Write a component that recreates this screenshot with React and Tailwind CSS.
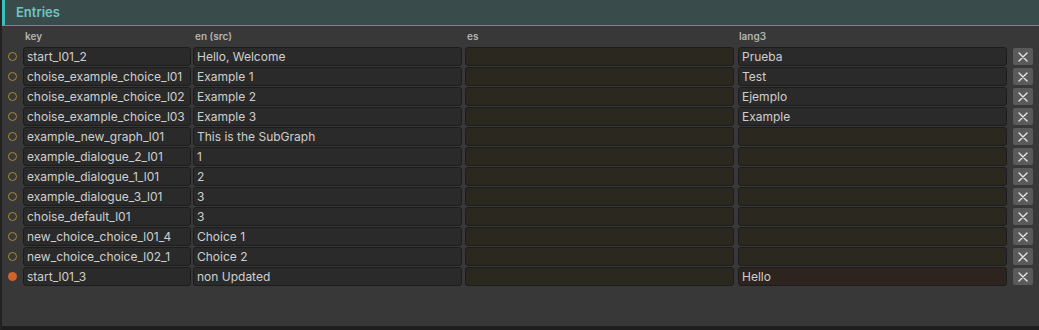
const rows = [
  { key: "start_l01_2", en: "Hello, Welcome", es: "", lang3: "Prueba" },
  { key: "choise_example_choice_l01", en: "Example 1", es: "", lang3: "Test" },
  { key: "choise_example_choice_l02", en: "Example 2", es: "", lang3: "Ejemplo" },
  { key: "choise_example_choice_l03", en: "Example 3", es: "", lang3: "Example" },
  { key: "example_new_graph_l01", en: "This is the SubGraph", es: "", lang3: "" },
  { key: "example_dialogue_2_l01", en: "1", es: "", lang3: "" },
  { key: "example_dialogue_1_l01", en: "2", es: "", lang3: "" },
  { key: "example_dialogue_3_l01", en: "3", es: "", lang3: "" },
  { key: "choise_default_l01", en: "3", es: "", lang3: "" },
  { key: "new_choice_choice_l01_4", en: "Choice 1", es: "", lang3: "" },
  { key: "new_choice_choice_l02_1", en: "Choice 2", es: "", lang3: "" },
  { key: "start_l01_3", en: "non Updated", es: "", lang3: "Hello", stale: true },
];

function Cell({ value, width, tone = "plain" }) {
  const bg = {
    plain: "bg-[#2a2a2a]",
    empty: "bg-[#2b2820]",
    stale: "bg-[#2d2420]",
  };
  return (
    <div
      className={`${width} h-[19px] shrink-0 rounded-[3px] border border-[#1c1c1c] ${bg[tone]} px-[3px] flex items-center text-[12px] text-[#cfcfcf] leading-none whitespace-nowrap overflow-hidden`}
    >
      {value}
    </div>
  );
}

function Dot({ filled }) {
  return (
    <div className="w-[21px] shrink-0 flex items-center justify-center pr-[1px]">
      {filled ? (
        <div className="w-[9px] h-[9px] rounded-full bg-[#d0632b]" />
      ) : (
        <div className="w-[9px] h-[9px] rounded-full border-[1.5px] border-[#b0892e]" />
      )}
    </div>
  );
}

function RemoveButton() {
  return (
    <button className="ml-[6px] w-[20px] h-[17px] shrink-0 rounded-[2px] bg-[#5a5a5a] flex items-center justify-center">
      <svg width="10" height="10" viewBox="0 0 10 10">
        <path d="M1 1L9 9M9 1L1 9" stroke="#e6e6e6" strokeWidth="1.4" strokeLinecap="round" />
      </svg>
    </button>
  );
}

export default function App() {
  return (
    <div
      className="w-[1039px] h-[330px] bg-[#383838] border-l-2 border-[#222222] flex flex-col overflow-hidden"
      style={{ fontFamily: "Inter, 'Noto Sans', sans-serif" }}
    >
      <div className="h-[26px] shrink-0 bg-[#3a4b4b] border-b border-[#4e9995] border-l-[3px] border-l-[#3cbfbd] flex items-center pl-[11px]">
        <span className="text-[13px] font-semibold text-[#6cc6c2]">Entries</span>
      </div>

      <div className="flex h-[20px] items-center text-[10px] font-semibold text-[#b4b4b4]">
        <div className="w-[21px] shrink-0" />
        <div className="w-[168px] shrink-0 pl-[2px]">key</div>
        <div className="w-[269px] ml-[2px] shrink-0 pl-[2px]">en (src)</div>
        <div className="w-[269px] ml-[3px] shrink-0 pl-[2px]">es</div>
        <div className="w-[269px] ml-[4px] shrink-0 pl-[1px]">lang3</div>
      </div>

      <div className="flex flex-col gap-[1px] pt-[1px]">
        {rows.map((r) => (
          <div key={r.key} className="flex items-center h-[19px]">
            <Dot filled={r.stale} />
            <Cell value={r.key} width="w-[168px]" />
            <div className="ml-[2px]">
              <Cell value={r.en} width="w-[269px]" />
            </div>
            <div className="ml-[3px]">
              <Cell value={r.es} width="w-[269px]" tone="empty" />
            </div>
            <div className="ml-[4px]">
              <Cell
                value={r.lang3}
                width="w-[269px]"
                tone={r.stale ? "stale" : r.lang3 ? "plain" : "empty"}
              />
            </div>
            <RemoveButton />
          </div>
        ))}
      </div>

      <div className="flex-1" />
      <div className="h-[4px] shrink-0 bg-[#1e1e1e]" />
    </div>
  );
}
